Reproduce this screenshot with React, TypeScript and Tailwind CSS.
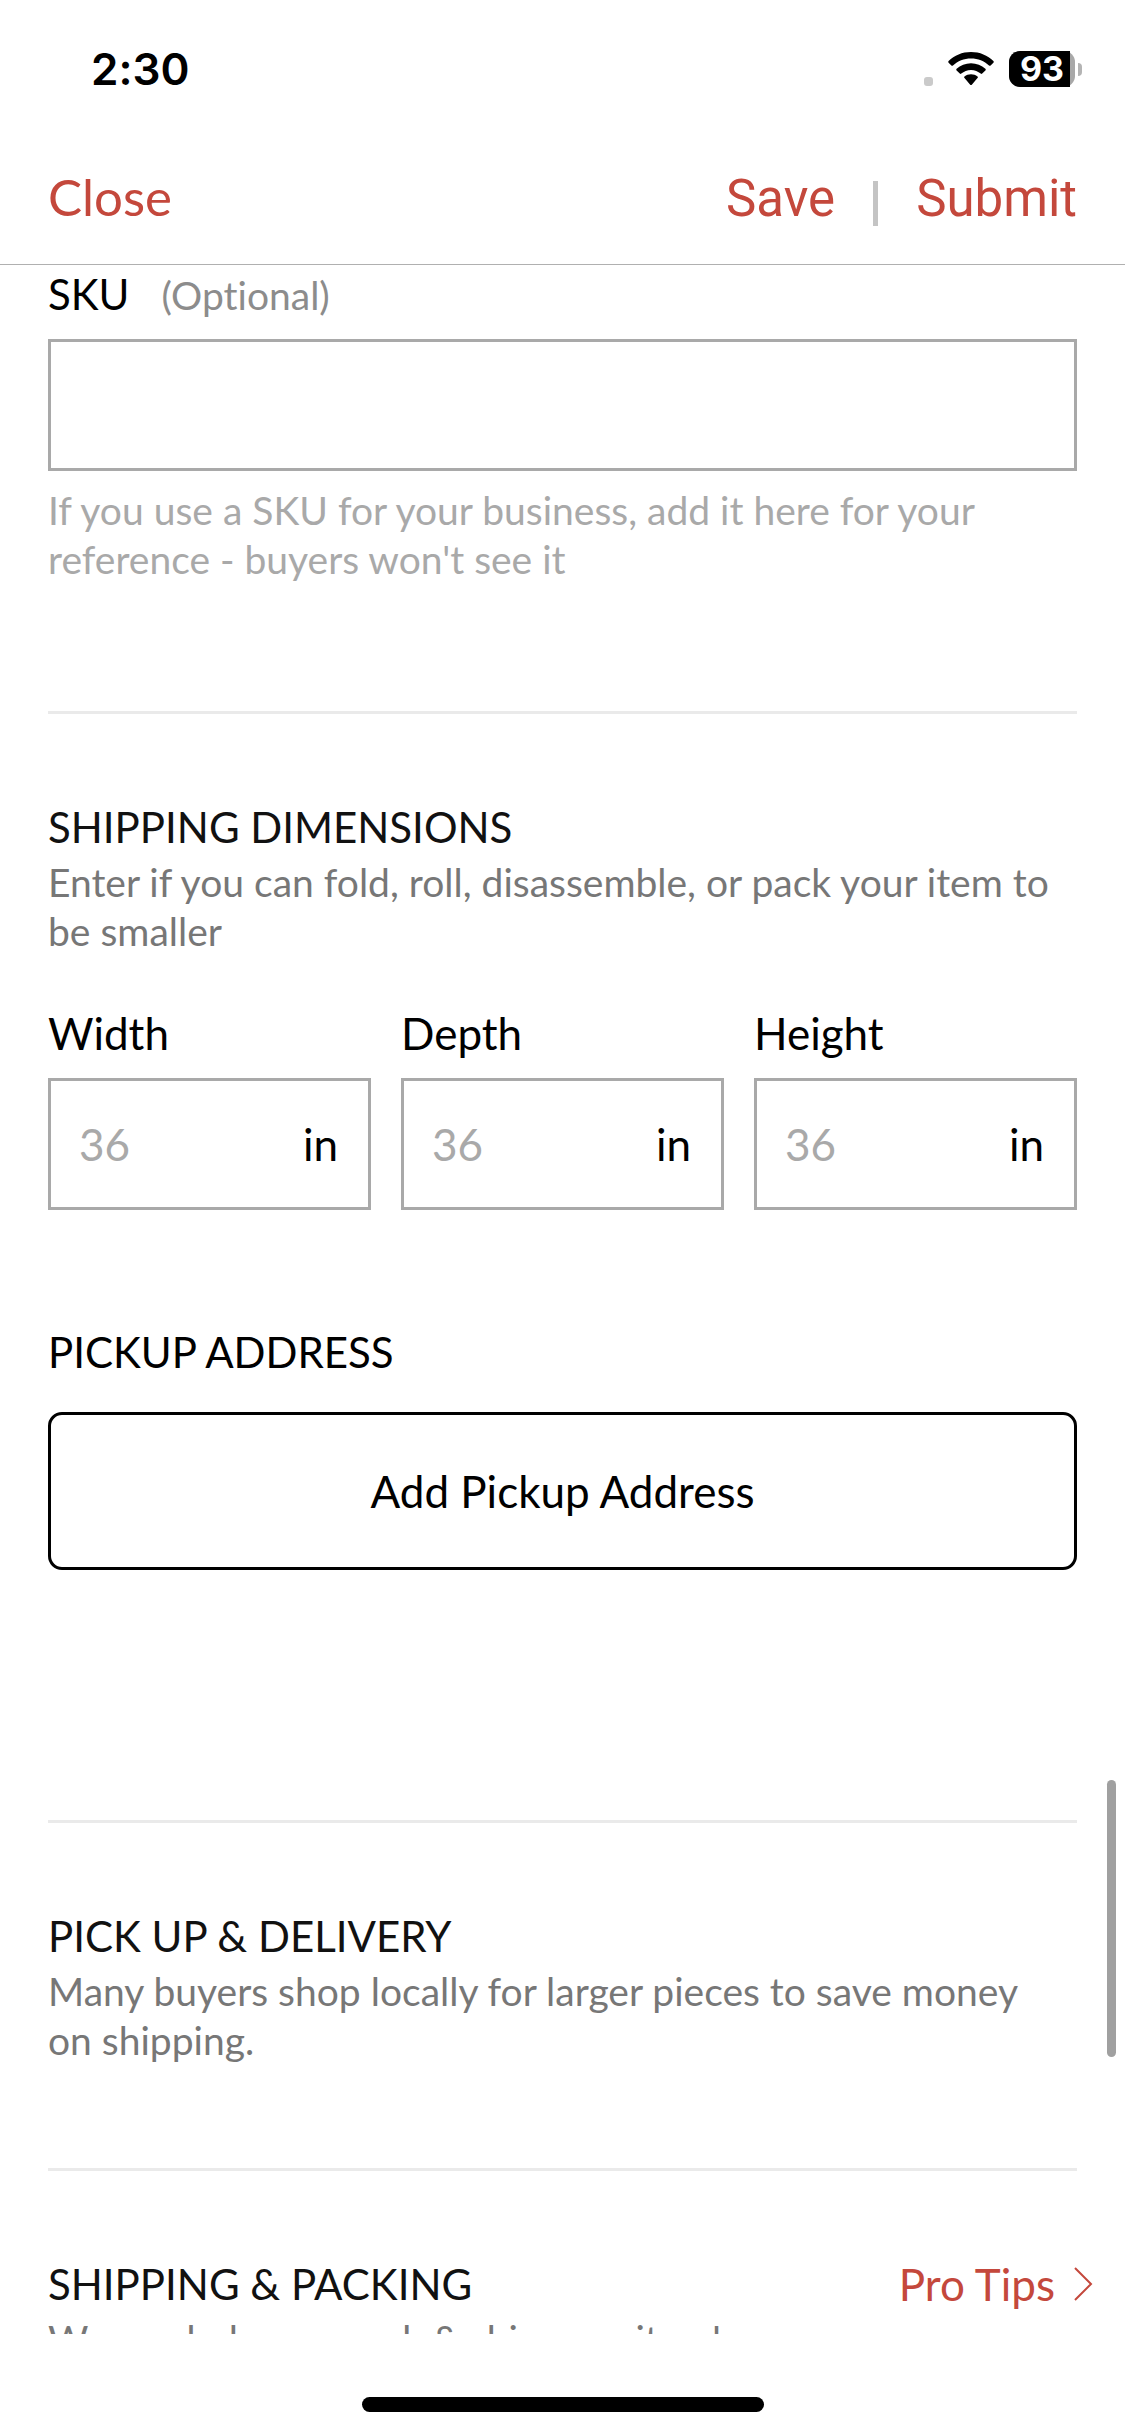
import { useState } from 'react'

export default function App() {
  return (
    <div className="relative flex h-screen w-full flex-col overflow-hidden bg-white font-['Lato',sans-serif] text-black [font-variant-ligatures:none]">
      <StatusBar />
      <NavBar />

      <main className="min-h-0 flex-1 overflow-hidden px-12 pt-[3px]">
        <SkuField />
        <Divider classes="mt-[127px]" />

        <SectionTitle>SHIPPING DIMENSIONS</SectionTitle>
        <SectionText>Enter if you can fold, roll, disassemble, or pack your item to be smaller</SectionText>
        <div className="mt-[51px] grid grid-cols-3 gap-[30px]">
          <DimensionField id="width" label="Width" />
          <DimensionField id="depth" label="Depth" />
          <DimensionField id="height" label="Height" />
        </div>

        <h2 className="mt-[116px] text-[42px] leading-[52px]">PICKUP ADDRESS</h2>
        <button type="button" className="mt-[34px] h-[158px] w-full rounded-[14px] border-3 border-black text-[44px] leading-[52px]">
          Add Pickup Address
        </button>
        <Divider classes="mt-[250px]" />

        <SectionTitle>PICK UP &amp; DELIVERY</SectionTitle>
        <SectionText>Many buyers shop locally for larger pieces to save money on shipping.</SectionText>
        <Divider classes="mt-[103px]" />

        <div className="flex items-end justify-between">
          <SectionTitle>SHIPPING &amp; PACKING</SectionTitle>
          <a href="#pro-tips" className="-mr-4 flex items-center gap-[18px] text-[44px] leading-[52px] text-[#c4483c]">
            Pro Tips
            <svg width="20" height="34" viewBox="0 0 20 34" fill="none" stroke="currentColor" strokeWidth="2">
              <path d="M2 1 18 17 2 33" />
            </svg>
          </a>
        </div>
        <SectionText>We can help you pack &amp; ship your item!</SectionText>
      </main>

      <div className="flex h-[102px] shrink-0 items-end justify-center pb-6">
        <div className="h-[15px] w-[402px] rounded-full bg-black" />
      </div>

      {/* scroll indicator */}
      <div className="absolute top-[1780px] right-[9px] h-[277px] w-[9px] rounded-full bg-[#a0a0a0]" />
    </div>
  )
}

function StatusBar() {
  return (
    <div className="flex h-[138px] shrink-0 items-center justify-between pr-[43px] pl-[91px] font-['Inter',sans-serif]">
      <span className="text-[44px] leading-[54px] font-semibold">2:30</span>
      <div className="flex items-center">
        <span className="mt-6 mr-[15px] size-[9px] rounded-[3px] bg-[#cacaca]" />
        <svg width="46" height="34" viewBox="0 0 46 34" fill="currentColor" className="mr-[15px]">
          <path d="M23 0C14.2 0 6.300 3.400 .6 9c-.5.500-.5 1.200 0 1.700l2.800 2.800c.4.400 1.100.4 1.600 0C9.700 9 16 6.500 23 6.500S36.300 9 41 13.500c.5.400 1.200.4 1.600 0l2.800-2.800c.5-.5.500-1.200 0-1.700C39.700 3.400 31.800 0 23 0Z" />
          <path d="M23 11.200c-5.500 0-10.600 2.100-14.400 5.600-.5.500-.5 1.200 0 1.700l3.200 3.100c.4.400 1.100.4 1.500 0 2.600-2.300 6-3.700 9.700-3.700s7.100 1.400 9.700 3.700c.4.400 1.100.4 1.500 0l3.200-3.100c.5-.5.500-1.200 0-1.700-3.800-3.500-8.900-5.600-14.400-5.600Z" />
          <path d="M23 22.200c-2.500 0-4.700.8-6.500 2.300-.5.400-.5 1.200 0 1.600l5.700 6.600c.4.500 1.200.5 1.600 0l5.700-6.600c.5-.4.500-1.200 0-1.600-1.800-1.500-4-2.300-6.500-2.300Z" />
        </svg>
        <div className="relative h-9 w-[66px] rounded-[11px] bg-[#a8a8a8]">
          <div className="h-full w-[61px] rounded-l-[11px] bg-black" />
          <span className="absolute inset-0 text-center text-[34px] leading-9 font-bold text-white">93</span>
        </div>
        <span className="ml-[3px] h-[13px] w-1 rounded-r-full bg-[#b4b4b4]" />
      </div>
    </div>
  )
}

function NavBar() {
  return (
    <nav className="flex h-[127px] shrink-0 items-baseline justify-between border-b border-[#b0b0b0] px-12 pt-[29px] text-[51px] leading-[60px] text-[#c4483c]">
      <button type="button">Close</button>
      <div className="flex items-center font-['Roboto',sans-serif]">
        <button type="button">Save</button>
        <span className="mx-[38px] mt-2 h-[45px] w-[5px] bg-[#c4c4c4]" />
        <button type="button">Submit</button>
      </div>
    </nav>
  )
}

function SkuField() {
  const [sku, setSku] = useState('')

  return (
    <div>
      <label htmlFor="sku" className="flex items-baseline gap-8 text-[42px] leading-[52px]">
        SKU
        <span className="text-[39px] leading-[48px] text-[#8c8c8c]">(Optional)</span>
      </label>
      <input
        id="sku"
        value={sku}
        onChange={(e) => setSku(e.target.value)}
        className="mt-[19px] block h-[132px] w-full border-3 border-[#a9a9a9] px-7 text-[44px] outline-none"
      />
      <p className="mt-[15px] text-[39px] leading-[49px] text-[#a9a9a9]">
        If you use a SKU for your business, add it here for your reference - buyers won't see it
      </p>
    </div>
  )
}

function DimensionField({ id, label }: { id: string; label: string }) {
  const [value, setValue] = useState('')

  return (
    <div className="min-w-0 text-[44px] leading-[52px]">
      <label htmlFor={id} className="block">{label}</label>
      <div className="mt-[19px] flex h-[132px] items-center border-3 border-[#a9a9a9] pr-[30px] pl-7">
        <input
          id={id}
          value={value}
          placeholder="36"
          onChange={(e) => setValue(e.target.value)}
          className="min-w-0 flex-1 outline-none placeholder:text-[#a9a9a9]"
        />
        <span>in</span>
      </div>
    </div>
  )
}

function SectionTitle({ children }: { children: React.ReactNode }) {
  return <h2 className="mt-[87px] text-[42px] leading-[52px] text-[#111111]">{children}</h2>
}

function SectionText({ children }: { children: React.ReactNode }) {
  return <p className="mt-[5px] pr-4 text-[39px] leading-[49px] text-[#777777]">{children}</p>
}

function Divider({ classes }: { classes: string }) {
  return <hr className={`border-t-3 border-[#eaeaea] ${classes}`} />
}
